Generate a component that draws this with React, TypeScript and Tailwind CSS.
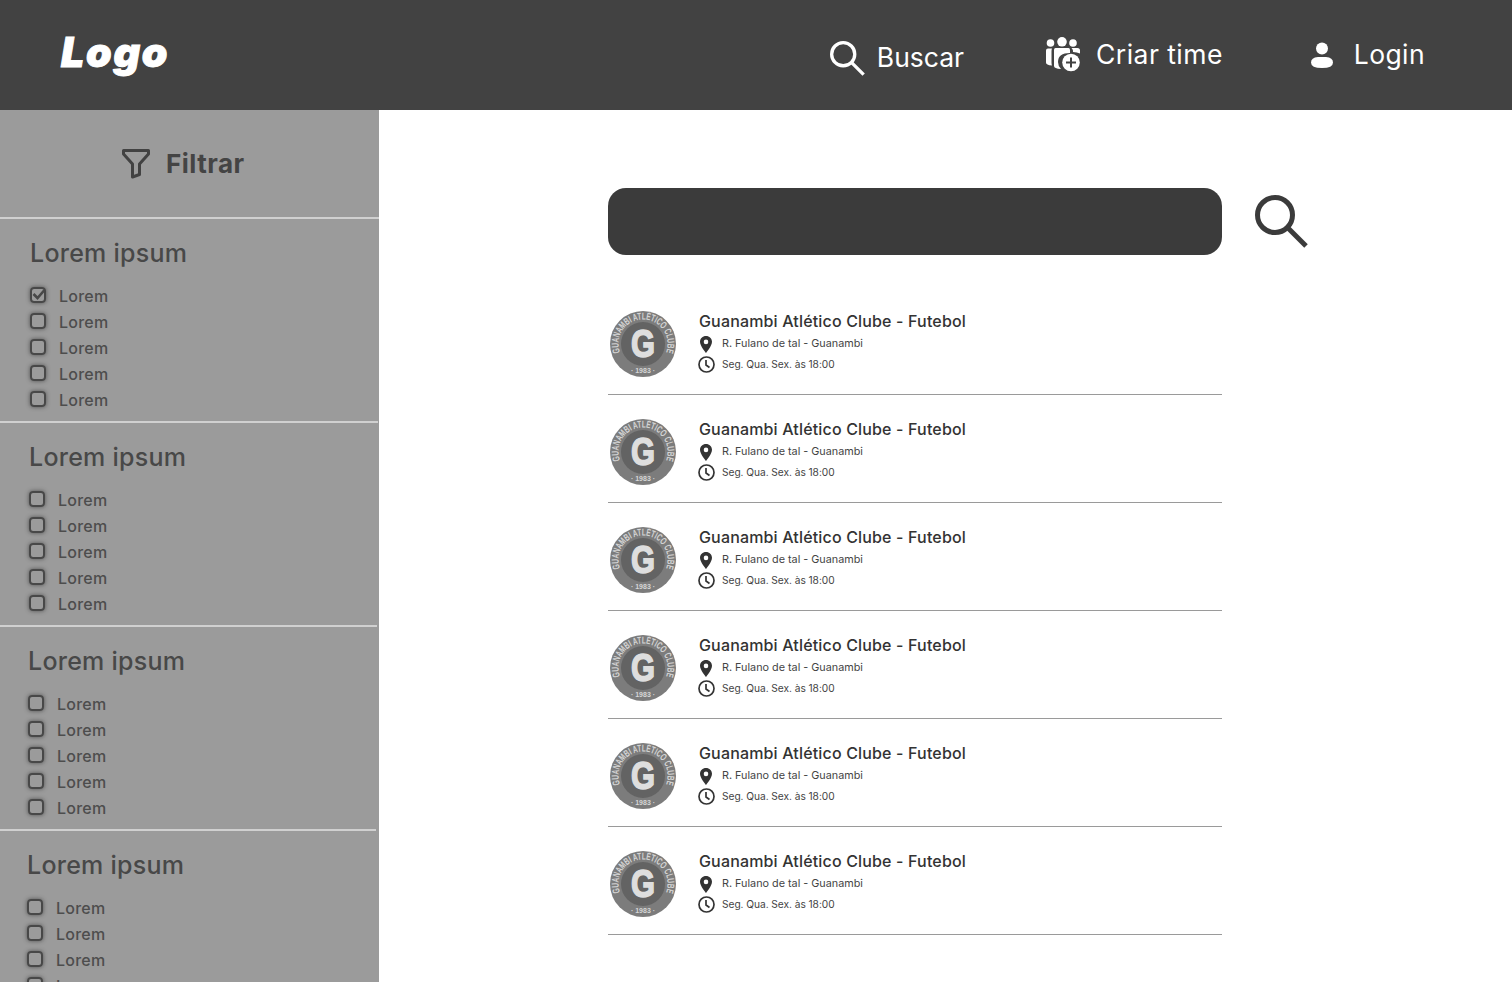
const font = { fontFamily: '"Inter", "Liberation Sans", sans-serif' };

function SearchIcon({ className, color }: { className: string; color: string }) {
  return (
    <svg viewBox="0 0 53 53" className={className} fill="none" stroke={color} strokeWidth="5">
      <circle cx="20" cy="20" r="17.5" />
      <path d="M32 32 L51 51" />
    </svg>
  );
}

function TeamIcon() {
  return (
    <svg viewBox="0 0 36 36" className="w-[36px] h-[36px] shrink-0">
      <g fill="#fff">
        <circle cx="4.500" cy="6" r="3.800" />
        <circle cx="16" cy="4.800" r="4.800" />
        <circle cx="27" cy="6" r="3.800" />
        <path d="M2 11.500 h4 q-.5 1-.5 3 v11 q0 2 .5 3 q-6-.5-6-3 v-12 q0-2 2-2z" />
        <path d="M9.500 11 h13 q1.500 0 1.500 2 v3 q-12 0-12 9 q0 4 3 7 q-7-.5-7-3 v-16 q0-2 1.500-2z" />
        <path d="M25.500 11 h6 q2.500 0 2.500 2.500 v3 q-3-1.500-7-1.500 q.5-2-1.500-4z" />
      </g>
      <circle cx="25" cy="25.500" r="8.800" fill="#fff" />
      <path d="M25 20.500 v10 M20 25.500 h10" stroke="#424242" strokeWidth="2" />
    </svg>
  );
}

function UserIcon() {
  return (
    <svg viewBox="0 0 22 27" className="w-[22px] h-[27px] shrink-0" fill="#fff">
      <circle cx="11" cy="6.500" r="6" />
      <path d="M0 20.500 q0-5 7-5.500 h8 q7 .5 7 5.500 q0 5.500-11 5.500 t-11-5.500z" />
    </svg>
  );
}

function FilterIcon() {
  return (
    <svg viewBox="0 0 28 30" className="w-[28px] h-[30px] shrink-0" fill="none" stroke="#424242" strokeWidth="3" strokeLinejoin="round">
      <path d="M1.500 1.500 H26.500 V5 L17.500 15 V25.500 L10.500 28 V15 L1.500 5Z" />
    </svg>
  );
}

function PinIcon() {
  return (
    <svg viewBox="0 0 12 17" className="w-[12px] h-[17px]">
      <path fillRule="evenodd" fill="#333" d="M6 0 C2.600 0 0 2.600 0 5.800 C0 10 6 17 6 17 C6 17 12 10 12 5.800 C12 2.600 9.400 0 6 0Z M6 3.600 a2.300 2.300 0 1 1 0 4.600 a2.300 2.300 0 1 1 0-4.600Z" />
    </svg>
  );
}

function ClockIcon() {
  return (
    <svg viewBox="0 0 17 17" className="w-[17px] h-[17px]" fill="none" stroke="#333" strokeWidth="1.700">
      <circle cx="8.500" cy="8.500" r="7.500" />
      <path d="M8 4 V9 L11.500 11.500" />
    </svg>
  );
}

function Emblem({ id }: { id: number }) {
  const family = { fontFamily: '"Liberation Sans", sans-serif' };
  return (
    <svg viewBox="0 0 66 66" className="w-[66px] h-[66px] shrink-0">
      <defs>
        <path id={`top${id}`} d="M10 41.400 A24.500 24.500 0 1 1 56 41.400" />
      </defs>
      <circle cx="33" cy="33" r="33" fill="#7c7c7c" />
      <circle cx="33" cy="33" r="22" fill="#636363" />
      <text fontSize="10" fontWeight="700" fill="#d4d4d4" style={family} textLength="94" lengthAdjust="spacingAndGlyphs">
        <textPath href={`#top${id}`} textLength="94" lengthAdjust="spacingAndGlyphs">GUANAMBI ATLÉTICO CLUBE</textPath>
      </text>
      <text x="33" y="61.500" fontSize="7" fontWeight="700" fill="#d6d6d6" textAnchor="middle" style={family}>· 1983 ·</text>
      <text x="33" y="45.500" fontSize="39" fontWeight="700" fill="#dedede" stroke="#dedede" strokeWidth="1.600" textAnchor="middle" style={family} textLength="24" lengthAdjust="spacingAndGlyphs">G</text>
    </svg>
  );
}

function Check({ checked }: { checked?: boolean }) {
  return (
    <span className="relative mb-[1px] w-[16px] h-[16px] shrink-0 rounded-[4px] border-2 border-[#484848] shadow-[0_0_4px_rgba(50,50,50,0.7)]">
      {checked && (
        <svg viewBox="0 0 16 16" className="absolute left-[-2px] top-[-2px] w-[16px] h-[16px]" fill="none" stroke="#484848" strokeWidth="2.600">
          <path d="M3.500 7 L7.500 11 L14.500 3" />
        </svg>
      )}
    </span>
  );
}

function Group({ cls, gap, checked }: { cls: string; gap: string; checked?: boolean }) {
  return (
    <section className={`h-[204px] shrink-0 border-t-2 border-[#d0d0d0] pt-[16px] ${cls}`}>
      <h2 className={`h-[36px] leading-[36px] text-[25px] font-medium tracking-[0.25px] text-[#484848] ${gap}`}>Lorem ipsum</h2>
      <ul className={`mt-[12px] ${gap}`}>
        {[0, 1, 2, 3, 4].map((i) => (
          <li key={i} className="h-[26px] pb-[1px] flex items-center gap-[13px]">
            <Check checked={checked && i === 0} />
            <span className="text-[16px] font-medium tracking-[0.25px] text-[#4d4d4d]">Lorem</span>
          </li>
        ))}
      </ul>
    </section>
  );
}

function Row({ id }: { id: number }) {
  return (
    <article className="h-[108px] border-b border-[#9a9a9a] flex items-center pl-[2px] pt-[7px] gap-[23px]">
      <Emblem id={id} />
      <div className="flex flex-col mb-[2px]">
        <h3 className="h-[22px] leading-[20px] text-[16px] font-medium tracking-[0.16px] text-[#333]">Guanambi Atlético Clube - Futebol</h3>
        <p className="h-[21px] pt-[1px] flex items-center text-[10.800px] text-[#444]">
          <span className="w-[23px] pl-[1px] flex justify-start"><PinIcon /></span>R. Fulano de tal - Guanambi
        </p>
        <p className="h-[21px] flex items-center text-[10.200px] tracking-[-0.05px] text-[#444]">
          <span className="w-[24px] ml-[-1px] flex"><ClockIcon /></span>Seg. Qua. Sex. às 18:00
        </p>
      </div>
    </article>
  );
}

export default function App() {
  return (
    <div className="w-[1512px] h-[982px] overflow-hidden bg-white flex flex-col" style={font}>
      <header className="h-[110px] shrink-0 bg-[#424242] flex items-center pl-[61px] pr-[87px] text-white">
        <div className="text-[41px] font-black italic tracking-[1.800px] leading-none pb-[5px] [-webkit-text-stroke:1px_white]">Logo</div>
        <nav className="ml-auto flex items-center text-[26.500px]">
          <div className="flex items-center gap-[12px] pt-[6px] mr-[82px]">
            <SearchIcon className="w-[35px] h-[35px]" color="#fff" />
            <span>Buscar</span>
          </div>
          <div className="flex items-center gap-[14px] mr-[88px] tracking-[0.45px]">
            <TeamIcon />
            <span>Criar time</span>
          </div>
          <div className="flex items-center gap-[21px] tracking-[0.4px]">
            <UserIcon />
            <span>Login</span>
          </div>
        </nav>
      </header>
      <div className="flex-1 min-h-0 flex">
        <aside className="w-[379px] shrink-0 bg-[#9b9b9b] overflow-hidden flex flex-col">
          <div className="h-[107px] shrink-0 flex items-center pl-[122px] gap-[16px]">
            <FilterIcon />
            <span className="text-[26px] font-bold text-[#444] tracking-[0.5px]">Filtrar</span>
          </div>
          <Group cls="w-[379px]" gap="ml-[30px]" checked />
          <Group cls="w-[378px]" gap="ml-[29px]" />
          <Group cls="w-[377px]" gap="ml-[28px]" />
          <Group cls="w-[376px]" gap="ml-[27px]" />
        </aside>
        <main className="flex-1 pl-[229px] pt-[78px]">
          <div className="flex items-center gap-[33px]">
            <div className="w-[614px] h-[67px] rounded-[18px] bg-[#3b3b3b]" />
            <SearchIcon className="w-[53px] h-[53px]" color="#3b3b3b" />
          </div>
          <div className="w-[614px] mt-[32px]">
            {[0, 1, 2, 3, 4, 5].map((i) => <Row key={i} id={i} />)}
          </div>
        </main>
      </div>
    </div>
  );
}
